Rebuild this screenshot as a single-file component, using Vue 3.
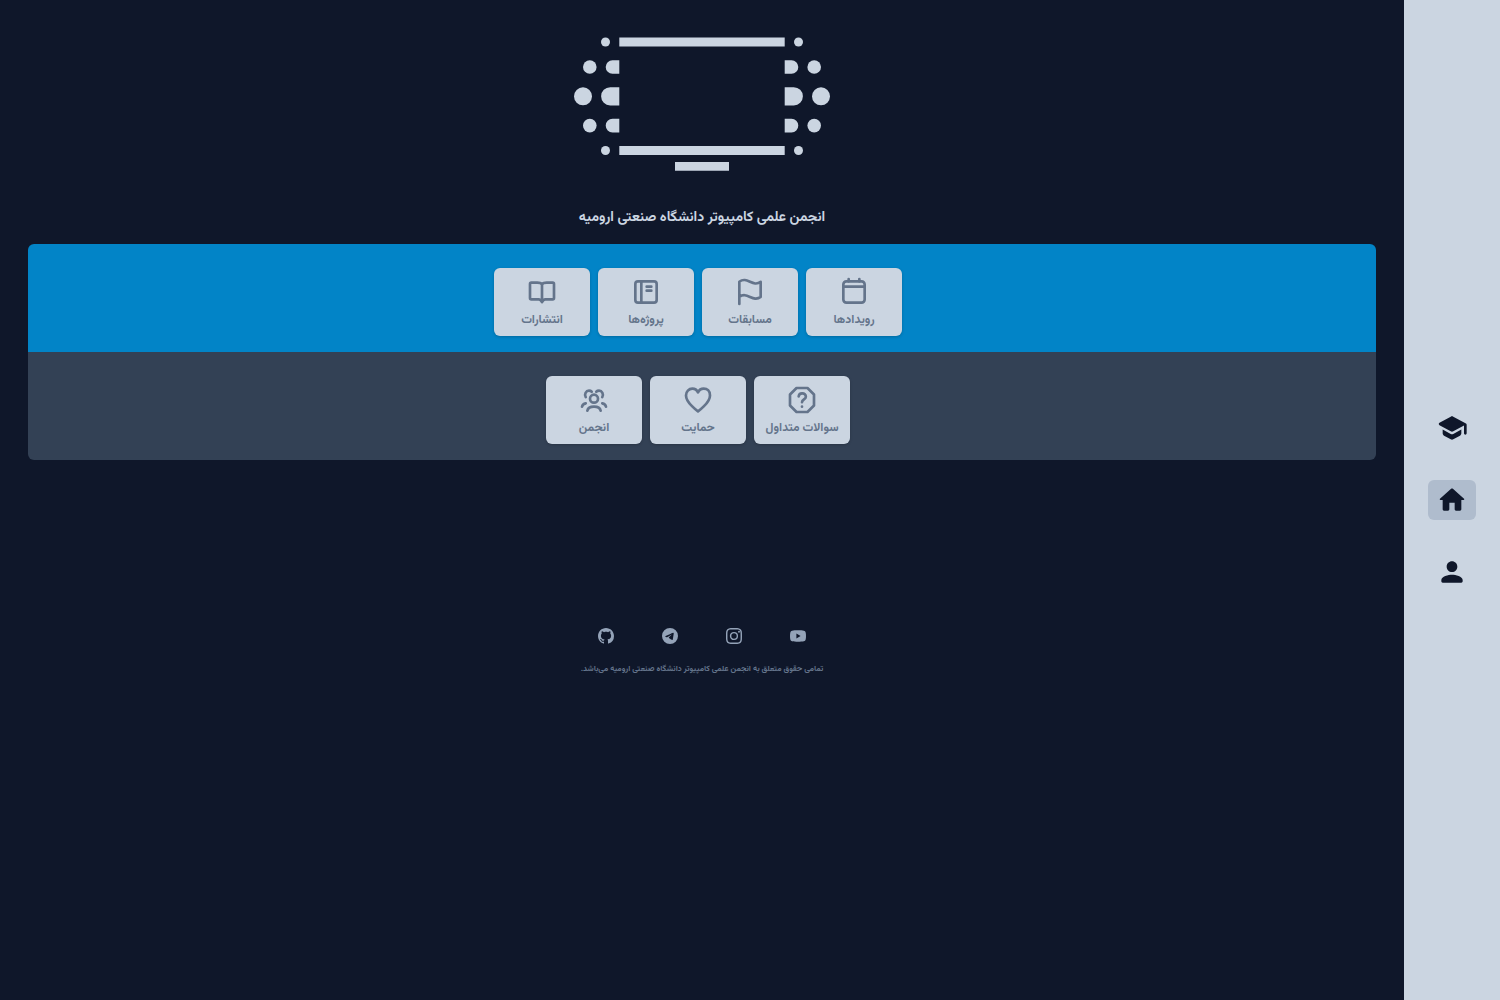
<script setup>
const navItems = [
  {
    label: 'آموزش',
    active: false,
    path: 'M5 13.18v2.81c0 .73.4 1.41 1.04 1.76l5 2.73c.6.33 1.32.33 1.92 0l5-2.73c.64-.35 1.04-1.03 1.04-1.76v-2.81l-6.04 3.3c-.6.33-1.32.33-1.92 0L5 13.18zm6.04-9.66l-8.43 4.6c-.69.38-.69 1.38 0 1.76l8.43 4.6c.6.33 1.32.33 1.92 0L21 10.09V16c0 .55.45 1 1 1s1-.45 1-1V9.59c0-.37-.2-.7-.52-.88l-9.52-5.19c-.6-.32-1.32-.32-1.92 0z',
  },
  {
    label: 'خانه',
    active: true,
    path: 'M10 19v-5h4v5c0 .55.45 1 1 1h3c.55 0 1-.45 1-1v-7h1.7c.46 0 .68-.57.33-.87L12.67 3.6c-.38-.34-.96-.34-1.34 0l-8.36 7.53c-.34.3-.13.87.33.87H5v7c0 .55.45 1 1 1h3c.55 0 1-.45 1-1z',
  },
  {
    label: 'حساب کاربری',
    active: false,
    path: 'M12 12c2.21 0 4-1.79 4-4s-1.79-4-4-4-4 1.79-4 4 1.79 4 4 4zm0 2c-2.67 0-8 1.34-8 4v1c0 .55.45 1 1 1h14c.55 0 1-.45 1-1v-1c0-2.66-5.33-4-8-4z',
  },
]

const sections = [
  {
    name: 'primary',
    cards: [
      { label: 'رویدادها', paths: ['M6.300 4h11.400A2.300 2.300 0 0 1 20 6.300v11.400a2.300 2.300 0 0 1-2.300 2.300H6.300A2.300 2.300 0 0 1 4 17.700V6.300A2.300 2.300 0 0 1 6.300 4z', 'M4 8h16M8 4V2.300M16 4V2.300'] },
      { label: 'مسابقات', paths: ['M4 21v-5.313m0 0c5.818-4.55 10.182 4.55 16 0V4.313c-5.818 4.55-10.182-4.55-16 0v11.374z'] },
      { label: 'پروژه‌ها', paths: ['M6 4h12a2 2 0 0 1 2 2v12a2 2 0 0 1-2 2H6a2 2 0 0 1-2-2V6a2 2 0 0 1 2-2z', 'M8.5 4v16M12.5 8h3.5M12.5 11h3.5'] },
      { label: 'انتشارات', paths: ['M12 6s-1-1-3.5-1H4a1 1 0 0 0-1 1v10.500a1 1 0 0 0 1 1h5.500c1.500 0 2.500 2 2.500 2s1-2 2.500-2H20a1 1 0 0 0 1-1V6a1 1 0 0 0-1-1h-4.500C13 5 12 6 12 6z', 'M12 6v13.500'] },
    ],
  },
  {
    name: 'secondary',
    cards: [
      { label: 'سوالات متداول', paths: ['M3 7.900L7.900 3h8.200L21 7.900v8.200L16.100 21H7.900L3 16.100z', 'M9.500 9.300A2.600 2.600 0 0 1 12.200 7a2.600 2.600 0 0 1 2.700 2.600c0 1.900-2.900 2-2.900 4', 'M12 17v.01'] },
      { label: 'حمایت', paths: ['M7.750 3.500C5.127 3.500 3 5.760 3 8.547 3 14.125 12 20.500 12 20.500s9-6.375 9-11.953C21 5.094 18.873 3.500 16.250 3.500c-1.860 0-3.470 1.136-4.250 2.790-.780-1.654-2.390-2.790-4.250-2.790z'] },
      { label: 'انجمن', paths: ['M12 8a3 3 0 1 1 0 6 3 3 0 0 1 0-6z', 'M7 20c.4-1.900 2.500-3 5-3s4.600 1.100 5 3', 'M5.800 9.800C4.500 7.600 6 5 8.200 5c.9 0 1.500.2 2.100.800M18.200 9.800C19.500 7.600 18 5 15.800 5c-.9 0-1.500.2-2.100.800', 'M3 17c.3-1.400 1.300-2.200 2.800-2.500M21 17c-.3-1.400-1.300-2.200-2.800-2.500'] },
    ],
  },
]

const socials = [
  {
    label: 'YouTube',
    path: 'M8 2.300c-2.200 0-4.600.1-5.900.4A2 2 0 0 0 .4 4.300C.1 5.400 0 6.700 0 8s.1 2.600.4 3.700a2 2 0 0 0 1.700 1.600c1.300.3 3.700.4 5.900.4s4.600-.1 5.900-.4a2 2 0 0 0 1.700-1.600c.3-1.100.4-2.400.4-3.700s-.1-2.600-.4-3.700a2 2 0 0 0-1.700-1.600c-1.300-.3-3.700-.4-5.900-.4zM6.400 5.600 10.600 8l-4.200 2.400z',
  },
  {
    label: 'Instagram',
    path: 'M8 0C5.829 0 5.556.01 4.703.048 3.850.088 3.269.222 2.760.420a3.900 3.900 0 0 0-1.417.923A3.900 3.900 0 0 0 .420 2.760C.222 3.268.087 3.850.048 4.700.010 5.555 0 5.827 0 8.001c0 2.172.010 2.444.048 3.297.040.852.174 1.433.372 1.942.205.526.478.972.923 1.417.444.445.890.719 1.416.923.510.198 1.090.333 1.942.372C5.555 15.990 5.827 16 8 16s2.444-.010 3.298-.048c.851-.040 1.434-.174 1.943-.372a3.900 3.900 0 0 0 1.416-.923c.445-.445.718-.891.923-1.417.197-.509.332-1.090.372-1.942C15.990 10.445 16 10.173 16 8s-.010-2.445-.048-3.299c-.040-.851-.175-1.433-.372-1.941a3.900 3.900 0 0 0-.923-1.417A3.900 3.900 0 0 0 13.240.420c-.510-.198-1.092-.333-1.943-.372C10.443.010 10.172 0 7.998 0zm0 1.442c2.136 0 2.389.007 3.232.046.780.035 1.204.166 1.486.275.373.145.640.319.920.599s.453.546.598.920c.110.281.240.705.275 1.485.039.843.047 1.096.047 3.231s-.008 2.389-.047 3.232c-.035.780-.166 1.203-.275 1.485a2.500 2.500 0 0 1-.599.919c-.280.280-.546.453-.920.598-.280.110-.704.240-1.485.276-.843.038-1.096.047-3.232.047s-2.390-.009-3.233-.047c-.780-.036-1.203-.166-1.485-.276a2.500 2.500 0 0 1-.920-.598 2.500 2.500 0 0 1-.600-.920c-.109-.281-.240-.705-.275-1.485-.038-.843-.046-1.096-.046-3.233s.008-2.388.046-3.231c.036-.780.166-1.204.276-1.486.145-.373.319-.640.599-.920s.546-.453.920-.598c.282-.110.705-.240 1.485-.276.738-.034 1.024-.044 2.515-.045zm4.988 1.328a.960.960 0 1 0 0 1.920.960.960 0 0 0 0-1.920M8 3.892a4.109 4.109 0 1 0 0 8.217 4.109 4.109 0 0 0 0-8.217m0 1.441a2.667 2.667 0 1 1 0 5.334 2.667 2.667 0 0 1 0-5.334',
  },
  {
    label: 'Telegram',
    path: 'M16 8A8 8 0 1 1 0 8a8 8 0 0 1 16 0M8.287 5.906q-1.168.486-4.666 2.010-.567.225-.595.442c-.030.243.275.339.690.470l.175.055c.408.133.958.288 1.243.294q.390.010.868-.320 3.269-2.206 3.374-2.230c.050-.012.120-.026.166.016s.042.120.037.141c-.030.129-1.227 1.241-1.846 1.817-.193.180-.330.307-.358.336a8 8 0 0 1-.188.186c-.380.366-.664.640.015 1.088.327.216.589.393.850.571.284.194.568.387.936.629q.140.092.270.187c.331.236.630.448.997.414.214-.020.435-.220.547-.820.265-1.417.786-4.486.906-5.751a1.400 1.400 0 0 0-.013-.315.340.340 0 0 0-.114-.217.530.530 0 0 0-.310-.093c-.300.005-.763.166-2.984 1.090',
  },
  {
    label: 'GitHub',
    path: 'M8 0C3.580 0 0 3.580 0 8c0 3.540 2.290 6.530 5.470 7.590.400.070.550-.170.550-.380 0-.190-.010-.820-.010-1.490-2.010.370-2.530-.490-2.690-.940-.090-.230-.480-.940-.820-1.130-.280-.150-.680-.520-.010-.530.630-.010 1.080.580 1.230.820.720 1.210 1.870.870 2.330.660.070-.520.280-.870.510-1.070-1.780-.200-3.640-.890-3.640-3.950 0-.870.310-1.590.820-2.150-.080-.200-.360-1.020.080-2.120 0 0 .670-.210 2.200.820.640-.180 1.320-.270 2-.270s1.360.090 2 .270c1.530-1.040 2.200-.820 2.200-.820.440 1.100.160 1.920.080 2.120.510.560.820 1.270.820 2.150 0 3.070-1.870 3.750-3.650 3.950.290.250.540.730.540 1.480 0 1.070-.010 1.930-.010 2.200 0 .210.150.460.550.380A8.010 8.010 0 0 0 16 8c0-4.420-3.580-8-8-8',
  },
]
</script>

<template>
  <div class="page" dir="rtl" lang="fa">
    <nav class="sidebar">
      <a
        v-for="item in navItems"
        :key="item.label"
        href="#"
        class="nav-link"
        :class="{ active: item.active }"
        :aria-label="item.label"
      >
        <svg viewBox="0 0 24 24" aria-hidden="true"><path :d="item.path" /></svg>
      </a>
    </nav>

    <div class="content">
      <header class="hero">
        <svg class="logo" viewBox="0 0 256 136" aria-hidden="true">
          <path d="M45.300 1.500h165.400v9H45.300zM45.300 110h165.400v9H45.300zM101 126h54v8.700h-54z" />
          <g id="logo-side">
            <circle cx="31.500" cy="6" r="4.500" />
            <circle cx="15.800" cy="31" r="6.800" />
            <circle cx="9" cy="60.300" r="9" />
            <circle cx="15.800" cy="89.600" r="6.800" />
            <circle cx="31.500" cy="114.500" r="4.500" />
            <path d="M45.300 24.200v13.600h-6.800a6.800 6.800 0 0 1 0-13.600zM45.300 51.200v18.200h-9.100a9.100 9.100 0 0 1 0-18.200zM45.300 82.800v13.600h-6.800a6.800 6.800 0 0 1 0-13.600z" />
          </g>
          <use href="#logo-side" transform="translate(256 0) scale(-1 1)" />
        </svg>
        <h1>انجمن علمی کامپیوتر دانشگاه صنعتی ارومیه</h1>
      </header>

      <main class="panel">
        <section v-for="section in sections" :key="section.name" class="row" :class="section.name">
          <a v-for="card in section.cards" :key="card.label" href="#" class="card">
            <svg viewBox="0 0 24 24" aria-hidden="true">
              <path v-for="d in card.paths" :key="d" :d="d" />
            </svg>
            <span>{{ card.label }}</span>
          </a>
        </section>
      </main>

      <footer class="footer">
        <div class="socials">
          <a v-for="social in socials" :key="social.label" href="#" :aria-label="social.label">
            <svg viewBox="0 0 16 16" aria-hidden="true"><path fill-rule="evenodd" :d="social.path" /></svg>
          </a>
        </div>
        <p>تمامی حقوق متعلق به انجمن علمی کامپیوتر دانشگاه صنعتی ارومیه می‌باشد.</p>
      </footer>
    </div>
  </div>
</template>

<style>
body {
  margin: 0;
  background: #0f172a;
}
</style>

<style scoped>
.page {
  display: flex;
  min-height: 100vh;
  background: #0f172a;
  color: #cbd5e1;
  font-family: Vazirmatn, "DejaVu Sans", sans-serif;
  font-weight: 700;
}

.sidebar {
  display: flex;
  flex: none;
  flex-direction: column;
  align-items: center;
  justify-content: center;
  gap: 32px;
  width: 96px;
  background: #cbd5e1;
}

.nav-link {
  display: flex;
  align-items: center;
  justify-content: center;
  width: 48px;
  height: 40px;
  border-radius: 6px;
  color: #0f172a;
}

.nav-link.active {
  background: #afbccd;
}

.nav-link svg {
  width: 32px;
  height: 32px;
  fill: currentColor;
}

.content {
  flex: 1;
  min-width: 0;
  padding: 36px 28px;
}

.hero {
  display: flex;
  flex-direction: column;
  align-items: center;
}

.logo {
  width: 256px;
  height: 136px;
  fill: currentColor;
}

h1 {
  margin: 32px 0 12px;
  font-size: 14px;
  line-height: 28px;
  white-space: nowrap;
}

.panel {
  overflow: hidden;
  border-radius: 6px;
}

.row {
  display: flex;
  flex-wrap: wrap;
  justify-content: center;
  padding: 24px 0 16px;
}

.primary {
  background: #0284c7;
}

.secondary {
  background: #334155;
}

.card {
  display: flex;
  flex-direction: column;
  align-items: center;
  box-sizing: border-box;
  width: 96px;
  height: 68px;
  margin-inline-start: 8px;
  padding-top: 8px;
  border-radius: 6px;
  background: #cbd5e1;
  box-shadow: 0 1px 3px rgba(0, 0, 0, 0.2);
  color: #64748b;
  font-size: 12px;
  line-height: 24px;
  text-decoration: none;
  white-space: nowrap;
}

.card svg {
  width: 32px;
  height: 32px;
  fill: none;
  stroke: currentColor;
  stroke-width: 2;
  stroke-linecap: round;
  stroke-linejoin: round;
}

.footer {
  display: flex;
  flex-direction: column;
  align-items: center;
  gap: 16px;
  margin-top: 168px;
}

.socials {
  display: flex;
  gap: 48px;
}

.socials a {
  display: flex;
  color: #94a3b8;
}

.socials svg {
  width: 16px;
  height: 16px;
  fill: currentColor;
}

p {
  margin: 0;
  color: #64748b;
  font-size: 8px;
  line-height: 18px;
  white-space: nowrap;
}
</style>
